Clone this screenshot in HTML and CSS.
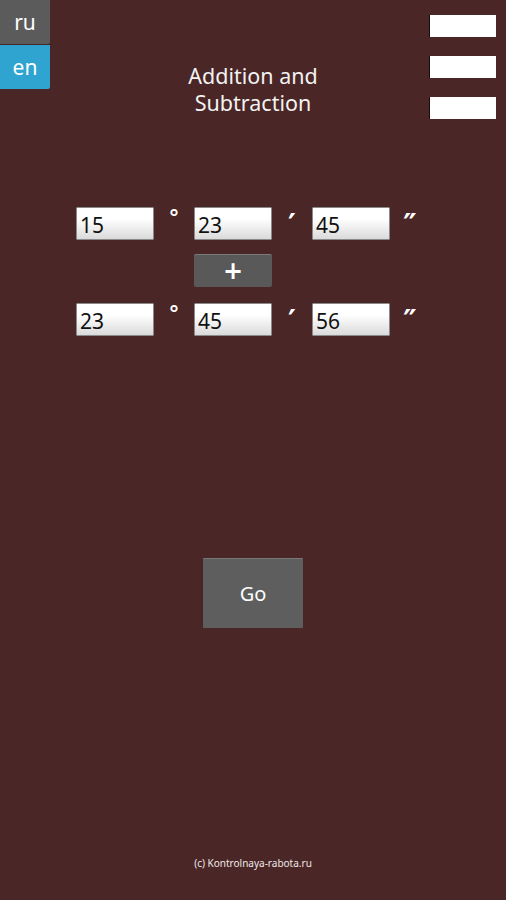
FILE: index.html
```html
<!DOCTYPE html>
<html lang="en">
<head>
    <meta charset="UTF-8">
    <meta name="viewport" content="width=device-width, initial-scale=1.0">
    <title>Addition and Subtraction</title>
    <link rel="stylesheet" href="styles.css">
</head>
<body>
    <div class="screen">
        <header class="top">
            <div class="lang">
                <button class="lang-btn ru">ru</button>
                <button class="lang-btn en">en</button>
            </div>
            <h1 class="title">Addition and<br>Subtraction</h1>
            <div class="slots">
                <div class="slot"></div>
                <div class="slot"></div>
                <div class="slot"></div>
            </div>
        </header>

        <!-- angle inputs -->
        <section class="calc">
            <div class="angle-row">
                <input class="field" type="text" value="15">
                <span class="sym deg">°</span>
                <input class="field" type="text" value="23">
                <span class="sym">′</span>
                <input class="field" type="text" value="45">
                <span class="sym">″</span>
            </div>
            <div class="op-row">
                <button class="op-btn">+</button>
            </div>
            <div class="angle-row">
                <input class="field" type="text" value="23">
                <span class="sym deg">°</span>
                <input class="field" type="text" value="45">
                <span class="sym">′</span>
                <input class="field" type="text" value="56">
                <span class="sym">″</span>
            </div>
        </section>

        <div class="go-wrap">
            <button class="go-btn">Go</button>
        </div>

        <p class="copy">(c) Kontrolnaya-rabota.ru</p>
    </div>
</body>
</html>
```

FILE: styles.css
```css
body, html {
    margin: 0;
    padding: 0;
    background-color: #4a2626;
    font-family: "Noto Sans", "Open Sans", sans-serif;
    color: #f2f2f2;
}

.screen {
    width: 506px;
    height: 900px;
    overflow: hidden;
}

.top {
    display: grid;
    grid-template-columns: 80px 1fr 80px;
    height: 120px;
}

.lang {
    display: flex;
    flex-direction: column;
    gap: 1px;
}

.lang-btn {
    width: 50px;
    height: 44px;
    border: none;
    border-radius: 0 0 2px 0;
    padding: 0;
    color: #fff;
    font-family: inherit;
    font-size: 21px;
    line-height: 40px;
}

.lang-btn.ru {
    background-color: #5b5b5b;
}

.lang-btn.en {
    background-color: #2fa4d1;
}

.title {
    margin: 62px 0 0 0;
    text-align: center;
    font-size: 21.5px;
    font-weight: normal;
    line-height: 27px;
}

.slots {
    display: flex;
    flex-direction: column;
    align-items: flex-end;
    gap: 19px;
    padding: 15px 10px 0 0;
}

.slot {
    width: 66px;
    height: 22px;
    background-color: #fff;
    box-shadow: -1px 0 0 #1a0c0c;
}

.calc {
    padding-top: 87px;
    display: flex;
    flex-direction: column;
    align-items: center;
}

.angle-row {
    display: flex;
    width: 354px;
    height: 33px;
}

.field {
    box-sizing: border-box;
    width: 78px;
    height: 33px;
    margin: 0;
    padding: 2px 0 0 3px;
    border: 1px solid #8a8a8a;
    border-radius: 1px;
    background: linear-gradient(#ffffff 35%, #dadada);
    font-family: inherit;
    font-size: 21px;
    color: #111;
}

.sym {
    width: 40px;
    height: 33px;
    text-align: center;
    font-family: "DejaVu Sans", sans-serif;
    font-size: 30px;
    font-weight: bold;
    line-height: 36px;
    color: #fff;
}

.sym.deg {
    font-size: 22px;
    line-height: 22px;
}

.op-row {
    display: flex;
    width: 354px;
    padding-left: 118px;
    box-sizing: border-box;
    margin: 14px 0 16px 0;
}

.op-btn {
    width: 78px;
    height: 33px;
    border: none;
    border-top: 1px solid #7a7a7a;
    border-radius: 2px;
    background-color: #595959;
    color: #fff;
    font-family: "DejaVu Sans", sans-serif;
    font-size: 24px;
    font-weight: bold;
    line-height: 28px;
    padding: 0;
}

.go-wrap {
    display: flex;
    justify-content: center;
    margin-top: 222px;
}

.go-btn {
    width: 100px;
    height: 70px;
    border: none;
    border-top: 1px solid #777;
    border-radius: 1px;
    background-color: #5e5e5e;
    color: #fff;
    font-family: inherit;
    font-size: 20px;
    padding: 0;
}

.copy {
    margin: 228px 0 0 0;
    text-align: center;
    font-size: 10px;
    line-height: 14px;
    color: #f0e6e6;
}
```
